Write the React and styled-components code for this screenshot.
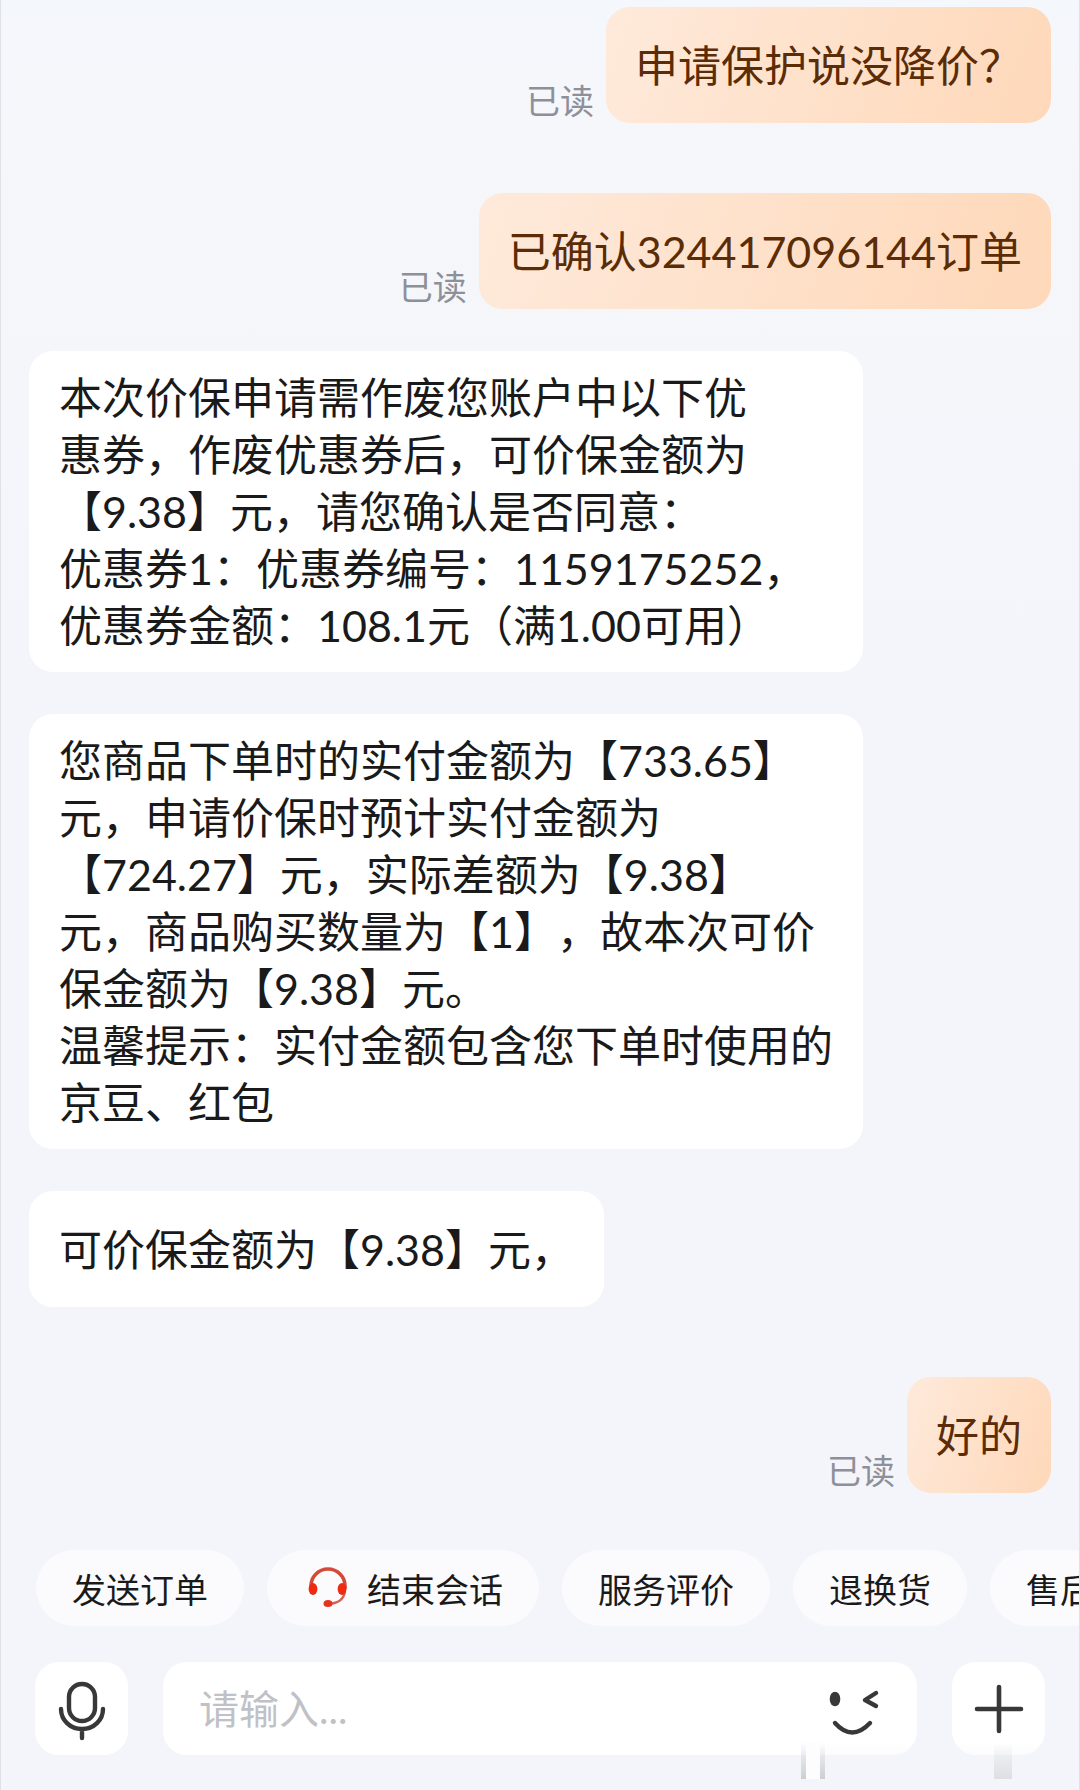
import React from "react";
import styled, { createGlobalStyle } from "styled-components";

const GlobalStyle = createGlobalStyle`
  *, *::before, *::after { box-sizing: border-box; }
  body {
    margin: 0;
    background: #f4f5fa;
    font-family: Lato, "Noto Sans CJK SC", sans-serif;
    text-spacing-trim: space-all;
    text-autospace: no-autospace;
    overflow-x: hidden;
  }
  button, input { font: inherit; color: inherit; border: 0; }
`;

const Page = styled.div`
  min-height: 100vh;
  display: flex;
  flex-direction: column;
  border: solid #dfe1e8;
  border-width: 0 1px;
  background: linear-gradient(#f4f7fb, #f4f5fa 40%);
  overflow: hidden;
`;

const Conversation = styled.main`
  flex: 1;
  display: flex;
  flex-direction: column;
  gap: 42px;
  padding: 7px 28px 56px;
`;

const SentGroup = styled.section`
  display: flex;
  flex-direction: column;
  gap: 70px;
  padding-top: ${(p) => (p.$spaced ? "28px" : "0")};
`;

const SentRow = styled.div`
  display: flex;
  justify-content: flex-end;
  align-items: flex-end;
  gap: 12px;
`;

const ReadMark = styled.span`
  color: #8e9099;
  font-size: 34px;
  line-height: 44px;
`;

const Bubble = styled.p`
  margin: 0;
  min-height: 116px;
  display: flex;
  align-items: center;
  padding: 18px 30px;
  border-radius: 24px;
  font-size: 43px;
  line-height: 57px;
  white-space: pre-line;
`;

const SentBubble = styled(Bubble)`
  padding: 18px 29px;
  color: #5b2c06;
  background: linear-gradient(110deg, #feeadb, #fed8b9);
`;

const ReceivedBubble = styled(Bubble)`
  align-self: flex-start;
  width: ${(p) => (p.$wide ? "100%" : "auto")};
  max-width: 834px;
  color: #1a1a1a;
  background: #fff;
`;

const QuickActions = styled.nav`
  display: flex;
  gap: 23px;
  padding-left: 35px;
  overflow: hidden;
`;

const Chip = styled.button`
  flex: none;
  display: flex;
  align-items: center;
  gap: 14px;
  height: 76px;
  padding: 0 36px;
  border-radius: 38px;
  background: #fbfbfd;
  color: #1a1a1a;
  font-size: 34px;
  white-space: nowrap;
`;

const Composer = styled.form`
  display: flex;
  gap: 35px;
  padding: 36px 34px 35px;
`;

const SquareButton = styled.button`
  flex: none;
  display: grid;
  place-items: center;
  width: 93px;
  height: 93px;
  padding: 0;
  border-radius: 24px;
  background: #fff;
`;

const InputBox = styled.div`
  flex: 1;
  display: flex;
  align-items: center;
  min-width: 0;
  padding: 0 33px 0 36px;
  border-radius: 24px;
  background: #fff;
`;

const MessageInput = styled.input`
  flex: 1;
  min-width: 0;
  padding: 0;
  outline: 0;
  background: transparent;
  color: #1a1a1a;
  font-size: 40px;
  &::placeholder { color: #bfc1c7; opacity: 1; }
`;

const EmojiButton = styled.button`
  flex: none;
  display: grid;
  padding: 0;
  background: transparent;
`;

const Footer = styled.footer`
  position: relative;
`;

const Haze = styled.div`
  position: absolute;
  right: 18px;
  bottom: 11px;
  width: 260px;
  height: 37px;
  pointer-events: none;
  background: linear-gradient(rgba(250, 250, 252, 0), #f4f5fa);
`;

const HazeMark = styled.span`
  position: absolute;
  bottom: 0;
  left: ${(p) => p.$left};
  width: ${(p) => p.$width};
  height: 36px;
  background: ${(p) => p.$fill};
`;

const HeadsetIcon = () => (
  <svg width="50" height="50" viewBox="0 0 50 50" fill="none" aria-hidden="true">
    <path d="M8 26V23A17 17 0 0 1 42 23V26" stroke="#d34a3a" strokeWidth="3.6" />
    <path d="M42 28C41 37 35 40 26 41" stroke="#d9604f" strokeWidth="2.4" />
    <ellipse cx="10" cy="26" rx="4.4" ry="6" fill="#ee2a10" />
    <ellipse cx="39" cy="26" rx="4.4" ry="6" fill="#ee2a10" />
    <ellipse cx="25" cy="40.5" rx="4.5" ry="3.5" fill="#e5341d" />
  </svg>
);

const MicIcon = () => (
  <svg width="60" height="64" viewBox="0 0 60 64" fill="none" stroke="#383838" strokeWidth="4.4" strokeLinecap="round" aria-hidden="true">
    <rect x="17" y="7" width="26" height="37" rx="13" />
    <path d="M9 32C9 43 18 52 30 52S51 43 51 32M30 52V61" />
  </svg>
);

const WinkIcon = () => (
  <svg width="60" height="60" viewBox="0 0 60 60" fill="none" stroke="#383838" strokeWidth="4.4" strokeLinecap="round" aria-hidden="true">
    <ellipse cx="11" cy="20" rx="5.3" ry="7.3" fill="#383838" stroke="none" />
    <path d="M52 14L41 21L52 27M11 44Q28 63 46 44" strokeLinejoin="round" />
  </svg>
);

const PlusIcon = () => (
  <svg width="52" height="52" viewBox="0 0 52 52" stroke="#383838" strokeWidth="4.6" strokeLinecap="round" aria-hidden="true">
    <path d="M26 4V48M4 26H48" />
  </svg>
);

const Sent = ({ children }) => (
  <SentRow>
    <ReadMark>已读</ReadMark>
    <SentBubble>{children}</SentBubble>
  </SentRow>
);

const COUPON_TEXT = `本次价保申请需作废您账户中以下优
惠券，作废优惠券后，可价保金额为
【9.38】元，请您确认是否同意：
优惠券1：优惠券编号：1159175252，
优惠券金额：108.1元（满1.00可用）`;

const PRICE_TEXT = `您商品下单时的实付金额为【733.65】
元，申请价保时预计实付金额为
【724.27】元，实际差额为【9.38】
元，商品购买数量为【1】，故本次可价
保金额为【9.38】元。
温馨提示：实付金额包含您下单时使用的
京豆、红包`;

export default function App() {
  return (
    <>
      <GlobalStyle />
      <Page>
        <Conversation>
          <SentGroup>
            <Sent>申请保护说没降价？</Sent>
            <Sent>已确认324417096144订单</Sent>
          </SentGroup>
          <ReceivedBubble $wide>{COUPON_TEXT}</ReceivedBubble>
          <ReceivedBubble $wide>{PRICE_TEXT}</ReceivedBubble>
          <ReceivedBubble>可价保金额为【9.38】元，</ReceivedBubble>
          <SentGroup $spaced>
            <Sent>好的</Sent>
          </SentGroup>
        </Conversation>
        <Footer>
          <QuickActions>
            <Chip type="button">发送订单</Chip>
            <Chip type="button"><HeadsetIcon />结束会话</Chip>
            <Chip type="button">服务评价</Chip>
            <Chip type="button">退换货</Chip>
            <Chip type="button">售后</Chip>
          </QuickActions>
          <Composer onSubmit={(e) => e.preventDefault()}>
            <SquareButton type="button" aria-label="语音"><MicIcon /></SquareButton>
            <InputBox>
              <MessageInput aria-label="消息" placeholder="请输入..." />
              <EmojiButton type="button" aria-label="表情"><WinkIcon /></EmojiButton>
            </InputBox>
            <SquareButton type="button" aria-label="更多"><PlusIcon /></SquareButton>
          </Composer>
          <Haze>
            <HazeMark $left="0" $width="24px" $fill="linear-gradient(rgba(205, 206, 210, 0), #cdced2)" />
            <HazeMark $left="5px" $width="14px" $fill="#fdfdfe" />
            <HazeMark $left="193px" $width="18px" $fill="linear-gradient(rgba(222, 223, 226, 0), #dedfe2)" />
          </Haze>
        </Footer>
      </Page>
    </>
  );
}
